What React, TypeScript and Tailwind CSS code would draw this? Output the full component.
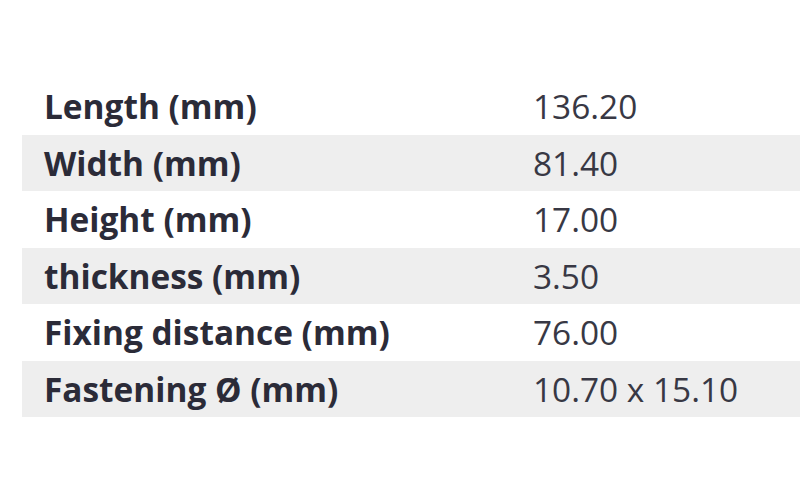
const rows: [string, string][] = [
  ['Length (mm)', '136.20'],
  ['Width (mm)', '81.40'],
  ['Height (mm)', '17.00'],
  ['thickness (mm)', '3.50'],
  ['Fixing distance (mm)', '76.00'],
  ['Fastening Ø (mm)', '10.70 x 15.10'],
]

export default function App() {
  return (
    <div className="w-[800px] h-[500px] bg-white overflow-hidden pt-[78px] pl-[22px] font-['Open_Sans',sans-serif]">
      <div className="w-[790px]">
        {rows.map(([label, value], i) => (
          <div
            key={label}
            className={`flex items-center h-[56.5px] text-[33.4px] ${i % 2 === 1 ? 'bg-[#eeeeee]' : ''}`}
          >
            <div className="w-[511px] pl-[22px] font-bold text-[#2b2b38]">{label}</div>
            <div className="text-[#383844]">{value}</div>
          </div>
        ))}
      </div>
    </div>
  )
}
